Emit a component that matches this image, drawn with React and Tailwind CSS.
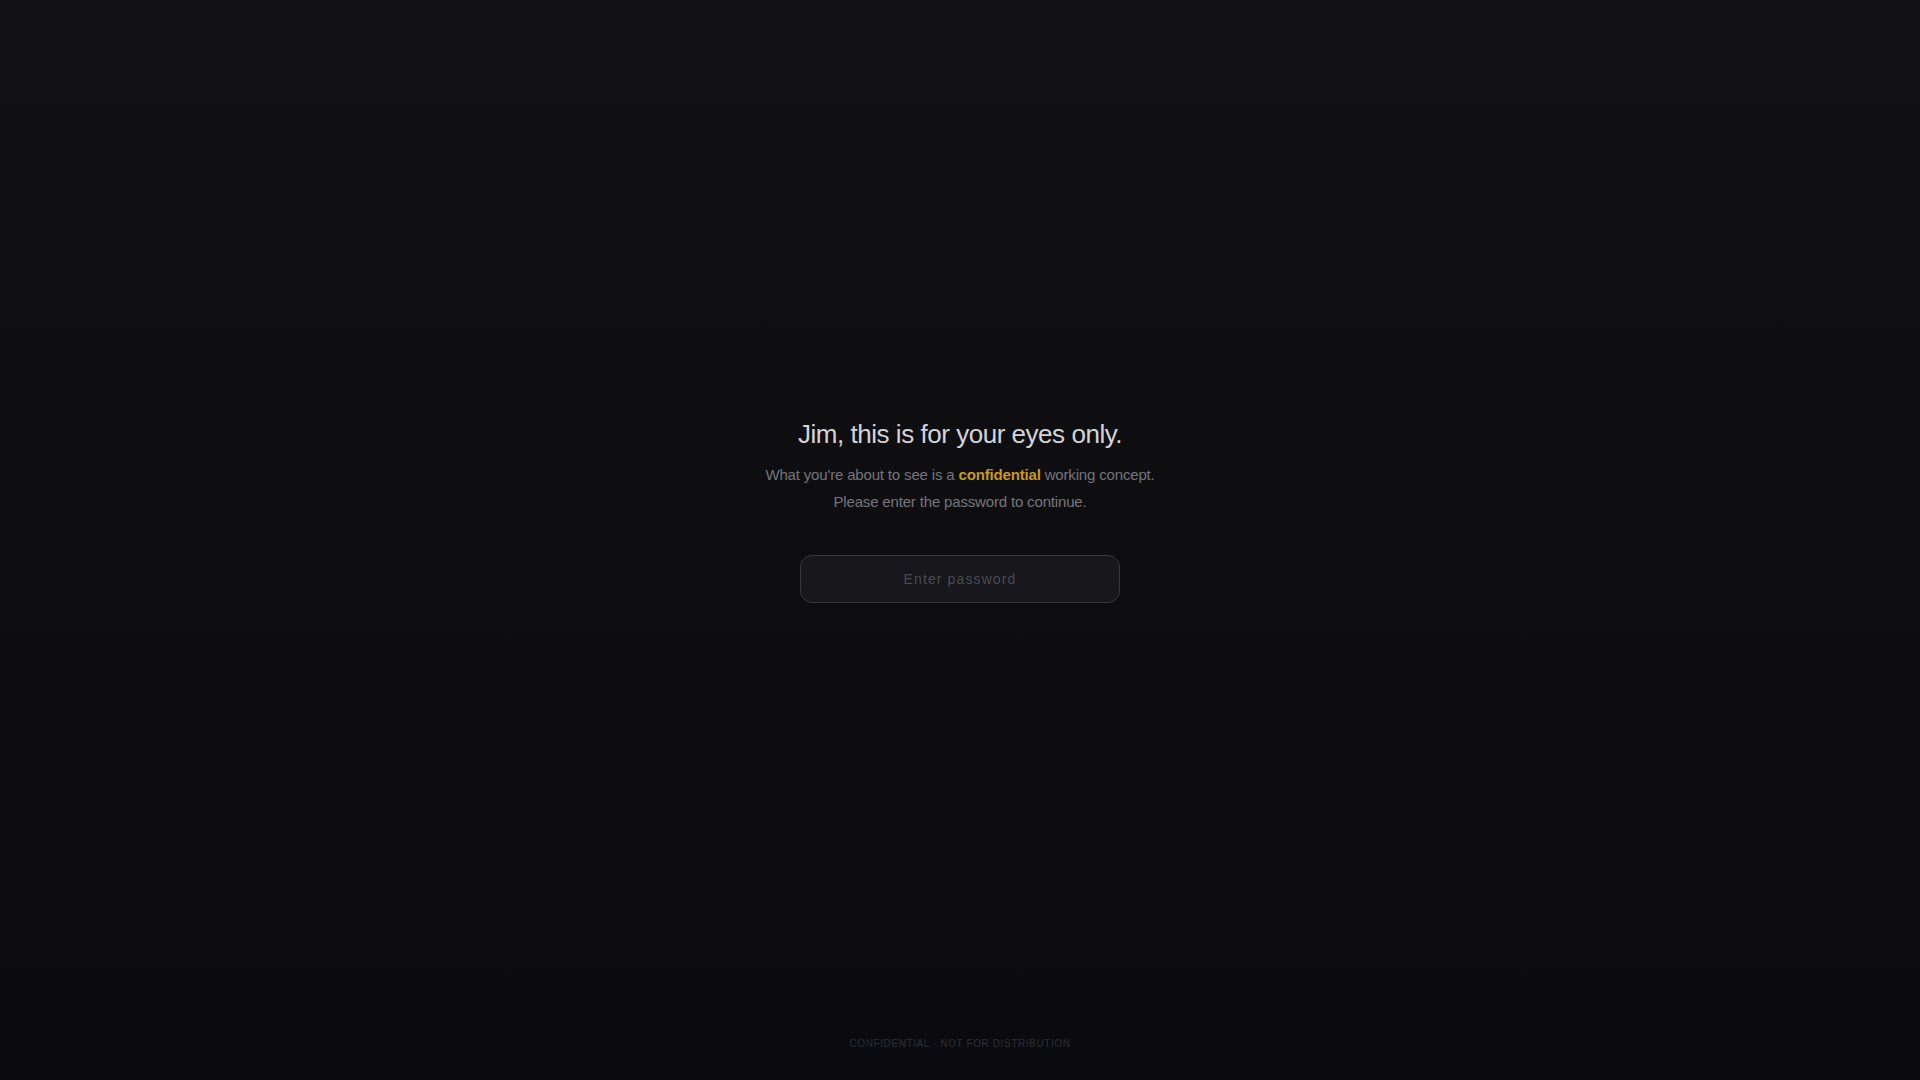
import React, { useState } from 'react';

export default function App() {
  const [password, setPassword] = useState('');

  return (
    <div className="flex min-h-screen flex-col bg-gradient-to-b from-[#111114] via-[#0e0e11] to-[#0a0a0f] font-['Liberation_Sans',Arial,sans-serif]">
      <main className="flex flex-1 flex-col items-center justify-center pb-[15px]">
        <h1 className="text-[26px] leading-[32px] font-normal tracking-[-0.018em] text-[#d4d4d8]">
          Jim, this is for your eyes only.
        </h1>
        <p className="mt-[11px] text-center text-[15px] leading-[27px] tracking-[-0.011em] text-[#75757b]">
          What you're about to see is a{' '}
          <span className="font-bold text-[#c99a1e]">confidential</span> working concept.
          <br />
          Please enter the password to continue.
        </p>
        <input
          type="password"
          value={password}
          onChange={(e) => setPassword(e.target.value)}
          placeholder="Enter password"
          className="mt-[40px] h-[48px] w-[320px] rounded-[12px] border border-[#36363c] bg-[#18181c] px-4 text-center text-[14px] tracking-[0.08em] text-[#d4d4d8] placeholder:text-[#4a4a51] focus:outline-none"
        />
      </main>
      <footer className="pb-[29px] text-center text-[10px] tracking-[0.06em] text-[#2f2f36] uppercase">
        Confidential · Not for distribution
      </footer>
    </div>
  );
}
